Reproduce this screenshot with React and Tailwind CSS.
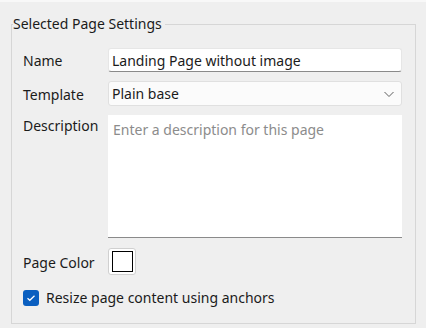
import React from 'react';

export default function App() {
  return (
    <div
      className="w-[426px] h-[328px] bg-[#efefef] text-[#1b1b1b] overflow-hidden"
      style={{ fontFamily: '"Noto Sans", "Open Sans", sans-serif' }}
    >
      <div className="h-[2px] bg-[#f8f8f8]" />
      <fieldset className="ml-[11px] mt-[12px] w-[405px] h-[310px] border border-[#d6d6d6] px-0">
        <legend className="ml-[1px] px-0 pr-[3px] text-[14px] leading-[20px] text-[#1b1b1b]">
          Selected Page Settings
        </legend>

        <div className="flex flex-col pl-[11px] pt-[14px]">
          <div className="flex items-center h-[24px]">
            <span className="w-[85px] text-[14px] leading-[20px] mt-[1px]">Name</span>
            <div className="w-[294px] h-[24px] bg-white border border-[#e6e6e6] border-b-[#8a8a8a] rounded-[3px] flex items-center pl-[3px] text-[14px]">
              Landing Page without image
            </div>
          </div>

          <div className="flex items-center h-[25px] mt-[9px]">
            <span className="w-[85px] text-[14px] leading-[20px] mt-[2px]">Template</span>
            <div className="w-[294px] h-[25px] bg-[#fbfbfb] border border-[#e0e0e0] rounded-[3px] flex items-center justify-between pl-[3px] pr-[6px] text-[14px]">
              <span>Plain base</span>
              <svg width="12" height="8" viewBox="0 0 12 8" fill="none" stroke="#5f5f5f" strokeWidth="1">
                <polyline points="1.5,2 6,6.5 10.5,2" />
              </svg>
            </div>
          </div>

          <div className="flex items-start mt-[9px]">
            <span className="w-[85px] text-[14px] leading-[20px] mt-[1px]">Description</span>
            <div className="w-[294px] h-[123px] bg-white border-b border-[#8a8a8a] pl-[5px] pt-[5px] text-[14px] leading-[20px] text-[#8c8c8c]">
              Enter a description for this page
            </div>
          </div>

          <div className="flex items-center h-[27px] mt-[10px]">
            <span className="w-[85px] text-[14px] leading-[20px] mt-[3px]">Page Color</span>
            <div className="w-[28px] h-[27px] bg-white border border-[#d0d0d0] rounded-[3px] flex items-center justify-center">
              <div className="w-[21px] h-[21px] border-[1.5px] border-black bg-white" />
            </div>
          </div>

          <div className="flex items-center mt-[13px]">
            <div className="w-[16px] h-[16px] rounded-[3px] bg-[#0a5fc0] flex items-center justify-center">
              <svg width="10" height="8" viewBox="0 0 10 8" fill="none" stroke="white" strokeWidth="1.2">
                <polyline points="1.5,4.2 3.8,6.3 8.5,1.7" />
              </svg>
            </div>
            <span className="ml-[7px] text-[14px] leading-[20px]">Resize page content using anchors</span>
          </div>
        </div>
      </fieldset>
    </div>
  );
}
